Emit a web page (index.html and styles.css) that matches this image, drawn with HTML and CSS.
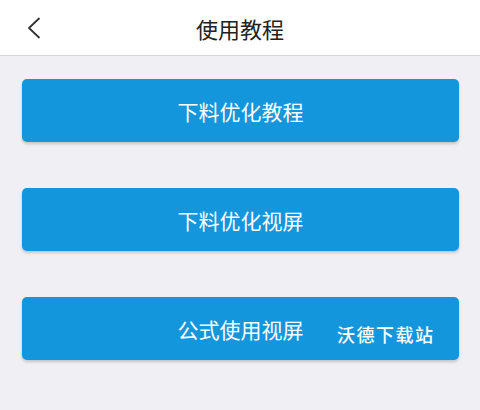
FILE: index.html
```html
<html lang="zh-CN">
	<head>
		<meta charset="UTF-8" />
		<meta name="viewport" content="width=device-width, initial-scale=1.0" />
		<title>使用教程</title>
		<link rel="stylesheet" href="styles.css">
	</head>

	<body>
		<div class="header">
			<span class="back">
				<svg width="16" height="22" viewBox="0 0 16 22">
					<path d="M13 1.5 L3 11 L13 20.5" fill="none" stroke="#333" stroke-width="1.8" stroke-linecap="round" stroke-linejoin="round" />
				</svg>
			</span>
			<h1>使用教程</h1>
		</div>

		<div class="container">
			<button class="button">下料优化教程</button>
			<button class="button">下料优化视屏</button>
			<button class="button">公式使用视屏</button>
		</div>

		<div class="watermark">沃德下载站</div>
	</body>
</html>
```

FILE: styles.css
```css
body {
	font-family: 'Noto Sans CJK SC', 'Noto Sans', sans-serif;
	margin: 0;
	padding: 0;
	background: #efeff4;
	height: 100vh;
	overflow: hidden;
	position: relative;
}

.header {
	position: relative;
	height: 56px;
	background: #fff;
	border-bottom: 1px solid #d6d6da;
	display: flex;
	align-items: center;
	justify-content: center;
	box-sizing: border-box;
}

.back {
	position: absolute;
	left: 26px;
	top: 17px;
	display: flex;
}

h1 {
	margin: 0;
	font-size: 22px;
	font-weight: 400;
	color: #222;
}

.container {
	display: flex;
	flex-direction: column;
	gap: 46px;
	padding: 23px 21px 0 22px;
}

.button {
	display: block;
	width: 100%;
	height: 63px;
	border: none;
	border-radius: 5px;
	background: #1396dc;
	color: #fff;
	font-family: inherit;
	font-size: 21px;
	font-weight: 400;
	box-shadow: 0 2px 3px rgba(0, 0, 0, 0.18);
	cursor: pointer;
}

.watermark {
	position: absolute;
	left: 337px;
	top: 321px;
	color: #fff;
	font-size: 18px;
	font-weight: 500;
	letter-spacing: 1.5px;
}
```
